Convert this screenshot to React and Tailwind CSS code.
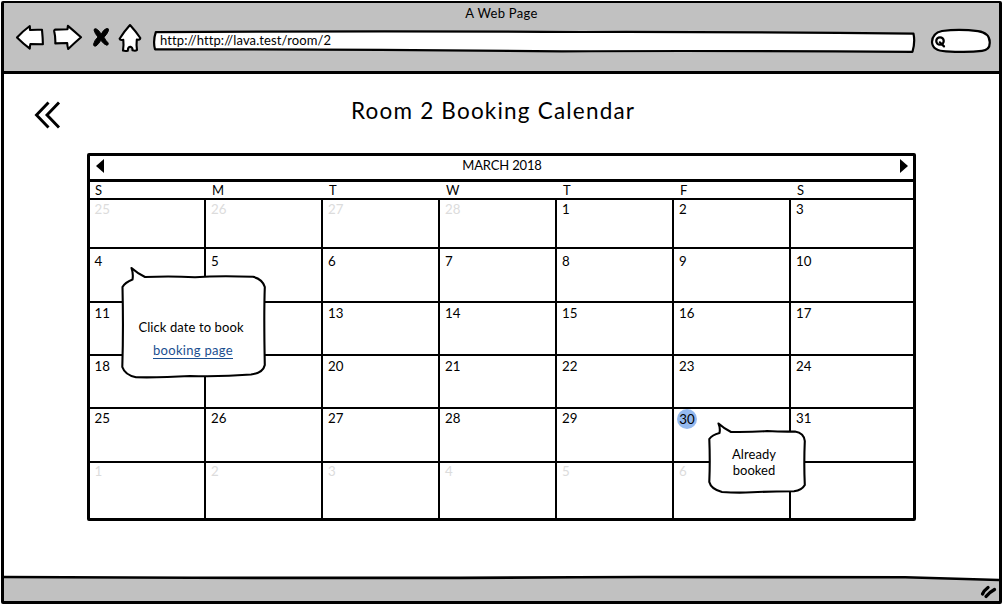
import React from "react";

const DAYS = ["S", "M", "T", "W", "T", "F", "S"];

const WEEKS = [
  { height: "h-[49px]", pad: "pt-0", days: [25, 26, 27, 28, 1, 2, 3] },
  { height: "h-[54px]", pad: "pt-[3px]", days: [4, 5, 6, 7, 8, 9, 10] },
  { height: "h-[53px]", pad: "pt-px", days: [11, null, 13, 14, 15, 16, 17] },
  { height: "h-[53px]", pad: "pt-px", days: [18, null, 20, 21, 22, 23, 24] },
  { height: "h-[54px]", pad: "pt-0", days: [25, 26, 27, 28, 29, 30, 31] },
  { height: "h-[55px]", pad: "-mt-px", days: [1, 2, 3, 4, 5, 6, null] },
];

const COLUMNS = "grid grid-cols-[116px_117px_117px_117px_117px_117px_122px]";

function isOutside(week, day) {
  return (week === 0 && day > 20) || (week === 5 && day < 20);
}

function BackIcon() {
  return (
    <svg className="h-[28px] w-[30px]" viewBox="0 0 30 28" fill="#fff" stroke="#000" strokeWidth="2.1" strokeLinejoin="round">
      <path d="M2 13.5 Q8 7 14.8 2 L15 6 Q21 5.500 27 5.800 Q27.800 14 27.900 20.300 L15.400 20 Q14.800 22 14.800 24.600 Q8.500 20 2 13.500Z" />
    </svg>
  );
}

function ForwardIcon() {
  return (
    <svg className="h-[28px] w-[30px]" viewBox="0 0 30 28" fill="#fff" stroke="#000" strokeWidth="2.1" strokeLinejoin="round">
      <path d="M1.200 7.200 Q1 5.700 2.500 5.600 L14.500 5.200 L14.900 1.900 Q21 7 28 13.300 Q22 18.500 15.200 25 Q14.300 22 14.200 19 L2.300 19.400 Q2.600 13 1.200 7.200Z" />
    </svg>
  );
}

function StopIcon() {
  return (
    <svg className="h-[22px] w-[20px]" viewBox="0 0 20 22" fill="#000" stroke="#000" strokeWidth="1" strokeLinejoin="round">
      <path d="M3 4 Q3.200 2 5.500 3 Q8.500 4.800 10.200 8.200 Q12.500 3.500 15.500 2.500 Q18.300 2 17.300 5 Q16 8.500 13 11.200 Q14.500 14.500 17 16.800 Q18 18.800 15.800 19.300 Q13 18.500 9.800 14.300 Q7.800 18 5 20 Q2.500 20.800 2.500 18.300 Q3.500 14 7 11 Q3.800 7.500 3 4Z" />
    </svg>
  );
}

function HomeIcon() {
  return (
    <svg className="h-[30px] w-[24px]" viewBox="0 0 24 30" fill="#fff" stroke="#000" strokeWidth="2.1" strokeLinejoin="round">
      <path d="M12 2 Q17.500 8 22.300 15 Q22 17.300 18.800 16.600 Q18.200 22 19 27 Q17.500 28.300 14.500 27.300 Q14.800 24.500 12.500 23.800 Q9.800 23.800 9.800 27.800 Q7 28.300 5 27.600 Q5.900 22 5.300 16.800 Q2 17.500 1.600 15.800 Q6 8.500 12 2Z" />
    </svg>
  );
}

function AddressBar() {
  return (
    <div className="relative ml-[10px] flex h-[24px] w-[764px] items-center">
      <svg className="absolute inset-0 h-[24px] w-[764px]" viewBox="0 0 764 24" fill="#fff" stroke="#000" strokeWidth="2.2" strokeLinejoin="round">
        <path d="M3.800 3.200 Q220 1.600 430 3 Q600 2.700 761.500 4.700 Q763.300 13 760.500 22.800 Q560 21.500 410 22.300 Q200 20.200 3 20.300 Q0.800 12 3.800 3.200Z" />
      </svg>
      <span className="relative -top-px pl-[8px] text-[13px] leading-[18px] tracking-[0.11px]">http://http://lava.test/room/2</span>
    </div>
  );
}

function SearchBox() {
  return (
    <svg className="ml-[14px] h-[26px] w-[62px]" viewBox="0 0 62 26" fill="#fff" stroke="#000" strokeWidth="2.200" strokeLinecap="round">
      <path d="M12 3 Q30 0.800 48 3.200 Q59.500 5 59.700 14 Q60.200 22 52 22.800 Q38 24.800 16 23.300 Q2.500 23 2 14 Q2.300 5 12 3Z" />
      <circle cx="10" cy="13" r="3.700" strokeWidth="2.300" />
      <path d="M9.800 14.300 L14 18.400" strokeWidth="2.200" />
    </svg>
  );
}

function Toolbar() {
  return (
    <header className="flex h-[71px] flex-col border-b-[3px] border-black bg-[#c1c1c1]">
      <div className="h-[20px] pt-[2px] text-center text-[13px] leading-[16px] tracking-[0.3px]">A Web Page</div>
      <div className="flex items-center pl-[11px]">
        <BackIcon />
        <div className="ml-[8px] flex"><ForwardIcon /></div>
        <div className="ml-[8px] flex -translate-y-px"><StopIcon /></div>
        <div className="ml-[7px] flex"><HomeIcon /></div>
        <div className="translate-y-[3px]"><AddressBar /></div>
        <div className="translate-y-[3px]"><SearchBox /></div>
      </div>
    </header>
  );
}

function Calendar() {
  return (
    <section className="h-[368px] w-[829px] rounded-[2px] border-[3px] border-black bg-white text-[13.3px] leading-[18px]">
      <div className="flex h-[26px] items-start justify-between border-b-[3px] border-black pt-[3px] pr-[5px] pl-[6px]">
        <svg className="h-[14px] w-[8px]" viewBox="0 0 8 14"><path d="M8 0 L0 7 L8 14Z" /></svg>
        <span className="-mt-[3px] text-[13px] tracking-[-0.15px]">MARCH 2018</span>
        <svg className="h-[14px] w-[8px]" viewBox="0 0 8 14"><path d="M0 0 L8 7 L0 14Z" /></svg>
      </div>
      <div className={COLUMNS + " h-[18px] border-b-2 border-black text-[13px] leading-[16px]"}>
        {DAYS.map((d, i) => (
          <span key={i} className={i === 0 ? "pl-[5px]" : "pl-[6px]"}>{d}</span>
        ))}
      </div>
      {WEEKS.map((week, w) => (
        <div key={w} className={COLUMNS + (w < 5 ? " border-b-2 border-black" : "")}>
          {week.days.map((day, i) => (
            <div key={i} className={week.height + (w < 5 ? " -mb-[2px]" : "") + (i < 6 ? " border-r-2 border-black" : "")}>
              <div className={(i === 0 ? "pl-[4.500px] " : "pl-[5px] ") + week.pad}>
                {w === 4 && day === 30 ? (
                  <span className="-ml-[2px] flex size-[20px] items-center justify-center rounded-full bg-[#94b9ef] pb-px">{day}</span>
                ) : (
                  <span className={isOutside(w, day) ? "text-[#dcdcdc]" : ""}>{day}</span>
                )}
              </div>
            </div>
          ))}
        </div>
      ))}
    </section>
  );
}

function BookHint() {
  return (
    <aside className="absolute top-[265px] left-[120px] flex h-[116px] w-[148px] flex-col items-center pt-[53px] text-[13px] leading-[18px] whitespace-nowrap">
      <svg className="absolute inset-0 h-[116px] w-[148px]" viewBox="0 0 148 116" fill="#fff" stroke="#000" strokeWidth="2.1" strokeLinejoin="round" strokeLinecap="round">
        <path d="M11.500 3 Q17 8 25 12 Q50 10.800 75 12.200 Q100 10.500 133 11.800 Q142.500 14 144.800 22 Q143.800 50 144.800 100 Q143 108 131 109.500 Q100 112 70 111 Q40 112.800 16 112.300 Q5 110 2.300 102 Q3.500 65 2.500 22 Q5 17.500 12.500 14.500 Q13.500 9 11.500 3Z" />
      </svg>
      <span className="relative -left-[3px] tracking-[0.1px]">Click date to book</span>
      <a className="relative -left-[1px] mt-[6px] border-b border-[#1b4f91] leading-[16px] tracking-[0.3px] text-[#1b4f91]">booking page</a>
    </aside>
  );
}

function BookedHint() {
  return (
    <aside className="absolute top-[419px] left-[707px] flex h-[76px] w-[100px] flex-col items-center pt-[27px] text-[13px] leading-[16px]">
      <svg className="absolute inset-0 h-[76px] w-[100px]" viewBox="0 0 100 76" fill="#fff" stroke="#000" strokeWidth="2.1" strokeLinejoin="round" strokeLinecap="round">
        <path d="M11.500 4.500 Q17 9.500 24 13 Q45 13.300 60 12 Q75 12.800 88 12.500 Q97 14 97.800 22 Q96.800 45 97.800 66 Q95 71 87 72.300 Q60 72.500 45 73.300 Q30 74 15 73 Q4 70 2.300 63 Q3.200 42 2.300 20 Q5 16 12.500 14 Q13.500 9 11.500 4.500Z" />
      </svg>
      <span className="relative -left-[3px] tracking-[0.05px]">Already</span>
      <span className="relative -left-[3px] tracking-[0.05px]">booked</span>
    </aside>
  );
}

function Footer() {
  return (
    <footer className="flex h-[26px]">
      <svg className="h-[26px] w-[996px]" viewBox="0 0 996 26">
        <path d="M0 2 Q300 3.800 640 2 Q800 1.800 902 2.300 L996 5 V26 H0Z" fill="#c1c1c1" />
        <path d="M0 2 Q300 3.800 640 2 Q800 1.800 902 2.300 L996 5" fill="none" stroke="#000" strokeWidth="2.600" />
        <path d="M979.500 19 Q981 15.500 985 12.500 M983 21.500 Q986 17.500 991.500 14.500" fill="none" stroke="#000" strokeWidth="3.300" strokeLinecap="round" />
      </svg>
    </footer>
  );
}

export default function App() {
  return (
    <div className="relative flex h-[605px] w-[1003px] flex-col overflow-hidden bg-white p-px font-['Lato','Noto_Sans',sans-serif] text-black">
      <div className="flex flex-1 flex-col rounded-[2px] border-[3px] border-t-[2px] border-black">
        <Toolbar />
        <main className="flex flex-1 flex-col items-start">
          <div className="flex h-[79px] w-full items-start">
            <svg className="mt-[26px] ml-[30px] h-[30px] w-[30px]" viewBox="0 0 30 30" fill="none" stroke="#000" strokeWidth="2.900">
              <path d="M14.500 2.500 L2.500 15 L14.500 27.500 M25 2.500 L13 15 L25 27.500" />
            </svg>
            <h1 className="mt-[22px] ml-[287px] text-[22.500px] leading-[30px] tracking-[1.200px] whitespace-nowrap">Room 2 Booking Calendar</h1>
          </div>
          <div className="ml-[83px]"><Calendar /></div>
        </main>
        <Footer />
      </div>
      <BookHint />
      <BookedHint />
    </div>
  );
}
